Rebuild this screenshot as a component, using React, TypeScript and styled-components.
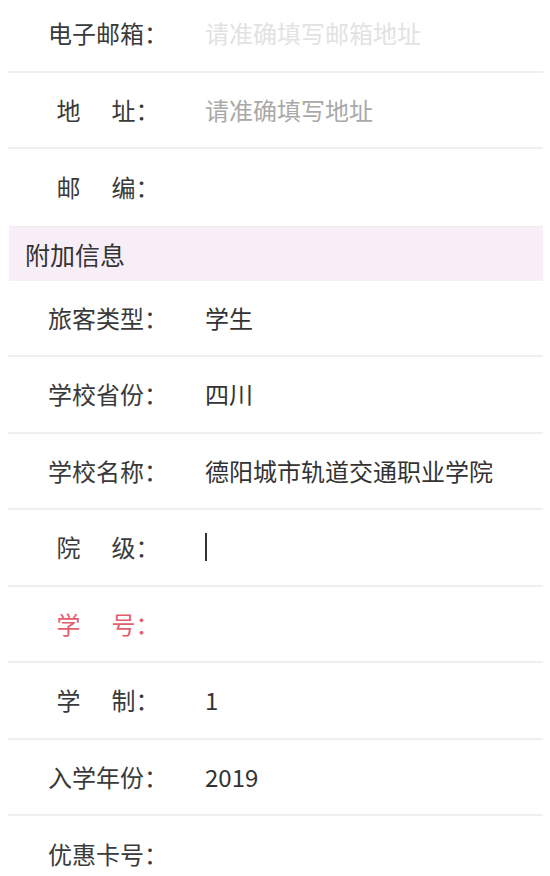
import React from "react";
import styled, { createGlobalStyle } from "styled-components";

const GlobalStyle = createGlobalStyle`
  html, body {
    margin: 0;
    padding: 0;
    background: #ffffff;
  }
  body {
    font-family: "Noto Sans CJK SC", "Noto Sans", sans-serif;
    color: #333333;
    overflow: hidden;
  }
`;

const Page = styled.div`
  margin-top: -4px;
  display: flex;
  flex-direction: column;
`;

const Row = styled.div<{ $last?: boolean }>`
  box-sizing: border-box;
  height: 76.5px;
  margin: 0 7px 0 8px;
  padding-left: 40px;
  display: flex;
  align-items: center;
  border-bottom: ${(p) => (p.$last ? "none" : "2px solid #efefef")};
  flex-shrink: 0;
`;

const Label = styled.div<{ $required?: boolean }>`
  width: 120px;
  flex-shrink: 0;
  text-align: center;
  font-size: 24px;
  line-height: 30px;
  white-space: nowrap;
  color: ${(p) => (p.$required ? "#e2606e" : "#3a3a3a")};
`;

const Spread = styled.span`
  display: inline-block;
  width: 31px;
`;

const Value = styled.div<{ $tone: "text" | "hint" | "faint" }>`
  margin-left: 37px;
  font-size: 24px;
  line-height: 30px;
  white-space: nowrap;
  display: flex;
  align-items: center;
  color: ${(p) =>
    p.$tone === "hint" ? "#a9a9a9" : p.$tone === "faint" ? "#e2e2e2" : "#333333"};
`;

const Caret = styled.span`
  display: inline-block;
  width: 2px;
  height: 28px;
  background: #333333;
`;

const SectionHeader = styled.div`
  box-sizing: border-box;
  height: 55px;
  margin: 0 7px 0 9px;
  padding-left: 16px;
  display: flex;
  align-items: center;
  background: #f8eef8;
  border-top: 1px solid #efeaef;
  font-size: 25px;
  color: #333333;
  flex-shrink: 0;
`;

type Field = {
  label: string;
  value?: string;
  tone?: "text" | "hint" | "faint";
  required?: boolean;
  caret?: boolean;
};

const renderLabel = (label: string) => {
  if (label.length === 2) {
    return (
      <>
        {label[0]}
        <Spread />
        {label[1]}：
      </>
    );
  }
  return <>{label}：</>;
};

const contactFields: Field[] = [
  { label: "电子邮箱", value: "请准确填写邮箱地址", tone: "faint" },
  { label: "地址", value: "请准确填写地址", tone: "hint" },
  { label: "邮编" },
];

const extraFields: Field[] = [
  { label: "旅客类型", value: "学生" },
  { label: "学校省份", value: "四川" },
  { label: "学校名称", value: "德阳城市轨道交通职业学院" },
  { label: "院级", caret: true },
  { label: "学号", required: true },
  { label: "学制", value: "1" },
  { label: "入学年份", value: "2019" },
  { label: "优惠卡号" },
];

const FieldRow = ({ f, last }: { f: Field; last?: boolean }) => (
  <Row $last={last}>
    <Label $required={f.required}>{renderLabel(f.label)}</Label>
    <Value $tone={f.tone ?? "text"}>
      {f.caret ? <Caret /> : f.value}
    </Value>
  </Row>
);

export default function App() {
  return (
    <>
      <GlobalStyle />
      <Page>
        {contactFields.map((f, i) => (
          <FieldRow key={f.label} f={f} last={i === contactFields.length - 1} />
        ))}
        <SectionHeader>附加信息</SectionHeader>
        {extraFields.map((f, i) => (
          <FieldRow key={f.label} f={f} last={i === extraFields.length - 1} />
        ))}
      </Page>
    </>
  );
}
